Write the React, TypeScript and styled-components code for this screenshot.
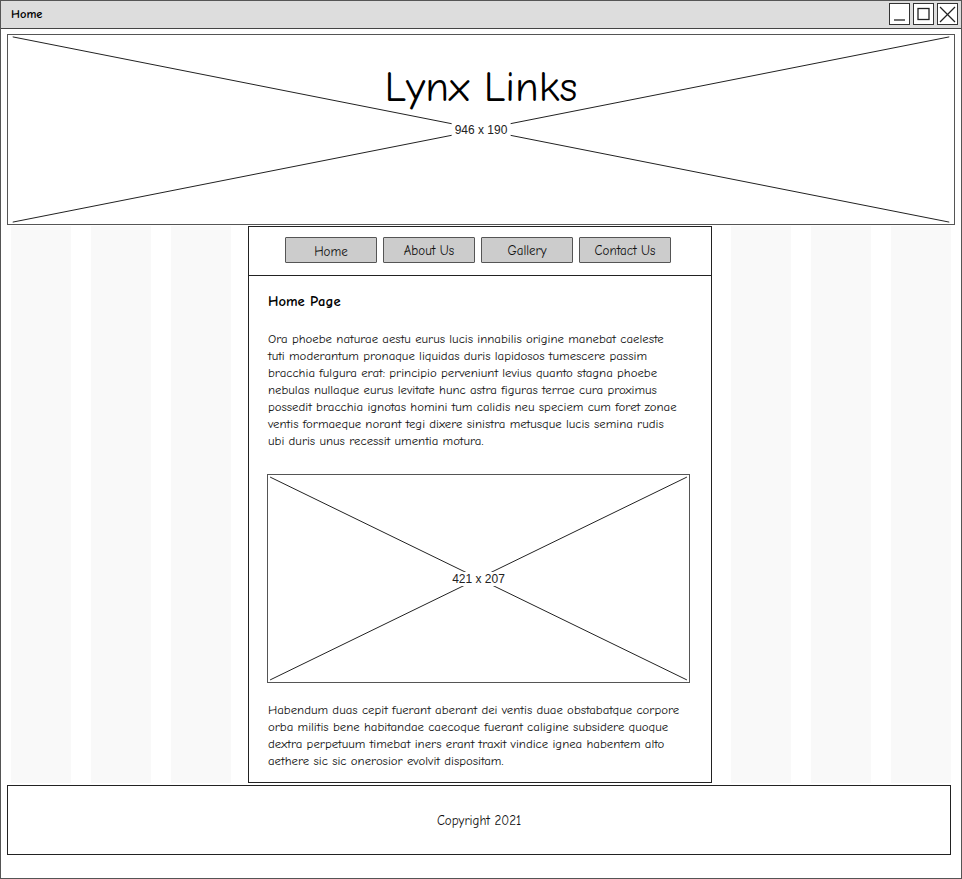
import React from "react";
import styled, {createGlobalStyle} from "styled-components";

const sketchFont = `"Comic Sans MS", "Comic Neue", "Liberation Sans", sans-serif`;

const GlobalStyle = createGlobalStyle`
  html, body {
    margin: 0;
    padding: 0;
    background: #ffffff;
  }
  * {
    box-sizing: border-box;
  }
`;

const Window = styled.div`
  width: 962px;
  height: 879px;
  border: 1px solid #555;
  border-top: none;
  display: flex;
  flex-direction: column;
  font-family: ${sketchFont};
  color: #111;
  overflow: hidden;
`;

const TitleBar = styled.div`
  height: 29px;
  flex: none;
  display: flex;
  align-items: center;
  justify-content: space-between;
  padding: 0 3px 1px 10px;
  background: #dddddd;
  border-bottom: 1px solid #444;
  margin: 0 -1px;
  border-top: 1px solid #555;
  border-left: 1px solid #555;
  border-right: 1px solid #555;
`;

const TitleText = styled.span`
  font-size: 12.5px;
  font-weight: bold;
  color: #000;
`;

const WindowButtons = styled.div`
  display: flex;
  gap: 3px;
`;

const WinButton = styled.div`
  width: 21px;
  height: 22px;
  background: #fff;
  border: 1px solid #333;
  display: flex;
  align-items: center;
  justify-content: center;
`;

const Body = styled.div`
  flex: 1;
  display: flex;
  flex-direction: column;
  padding: 5px 6px 0;
`;

const Placeholder = styled.div<{ w: number; h: number }>`
  position: relative;
  width: ${(p) => p.w}px;
  height: ${(p) => p.h}px;
  border: 1px solid #555;
  background: #fff;
  flex: none;
  svg.cross {
    position: absolute;
    inset: 0;
    width: 100%;
    height: 100%;
  }
`;

const SizeLabel = styled.span`
  position: absolute;
  left: 50%;
  top: 50%;
  transform: translate(-50%, -50%);
  background: #fff;
  padding: 0 3px;
  font-family: "Liberation Sans", Arial, sans-serif;
  font-size: 12px;
  line-height: 14px;
  color: #222;
  white-space: nowrap;
`;

const SiteTitle = styled.h1`
  position: absolute;
  top: 27px;
  left: 0;
  right: 0;
  margin: 0;
  text-align: center;
  font-size: 43px;
  font-weight: normal;
  line-height: 50px;
  color: #000;
`;

const Middle = styled.div`
  height: 557px;
  margin: 1px 4px 0;
  display: flex;
  justify-content: center;
  background-image: repeating-linear-gradient(
    to right,
    #f9f9f9 0px,
    #f9f9f9 60px,
    transparent 60px,
    transparent 80px
  );
`;

const Panel = styled.div`
  width: 464px;
  height: 557px;
  border: 1px solid #222;
  background: #fff;
  display: flex;
  flex-direction: column;
  margin-left: -2px;
`;

const Nav = styled.nav`
  height: 49px;
  flex: none;
  border-bottom: 1px solid #222;
  display: flex;
  justify-content: center;
  gap: 6px;
  padding-top: 10px;
  padding-right: 4px;
`;

const NavButton = styled.div<{ drop?: boolean }>`
  width: 92px;
  height: 26px;
  background: #cccccc;
  border: 1px solid #555;
  border-radius: 1px;
  font-size: 13px;
  display: flex;
  align-items: center;
  justify-content: center;
  padding-top: ${(p) => (p.drop ? 2 : 0)}px;
  color: #111;
`;

const Content = styled.div`
  padding: 17px 0 0 19px;
  display: flex;
  flex-direction: column;
`;

const Heading = styled.h2`
  margin: 0 0 20px;
  font-size: 14.6px;
  line-height: 17px;
  font-weight: bold;
  color: #000;
`;

const Para = styled.p`
  margin: 0;
  font-size: 12.8px;
  line-height: 17px;
  color: #111;
  white-space: nowrap;
`;

const ImageWrap = styled.div`
  margin: 25px 0 18px -1px;
`;

const Footer = styled.footer`
  width: 944px;
  height: 70px;
  margin-top: 2px;
  border: 1px solid #222;
  display: flex;
  align-items: center;
  justify-content: center;
  font-size: 13px;
  color: #111;
`;

const Cross: React.FC = () => (
  <svg className="cross" viewBox="0 0 100 100" preserveAspectRatio="none">
    <line x1="0.5" y1="1" x2="99.5" y2="99" stroke="#222" strokeWidth="1" vectorEffect="non-scaling-stroke" />
    <line x1="99.5" y1="1" x2="0.5" y2="99" stroke="#222" strokeWidth="1" vectorEffect="non-scaling-stroke" />
  </svg>
);

const navItems = ["Home", "About Us", "Gallery", "Contact Us"];

const firstPara = [
  "Ora phoebe naturae aestu eurus lucis innabilis origine manebat caeleste",
  "tuti moderantum pronaque liquidas duris lapidosos tumescere passim",
  "bracchia fulgura erat: principio perveniunt levius quanto stagna phoebe",
  "nebulas nullaque eurus levitate hunc astra figuras terrae cura proximus",
  "possedit bracchia ignotas homini tum calidis neu speciem cum foret zonae",
  "ventis formaeque norant tegi dixere sinistra metusque lucis semina rudis",
  "ubi duris unus recessit umentia motura.",
];

const secondPara = [
  "Habendum duas cepit fuerant aberant dei ventis duae obstabatque corpore",
  "orba militis bene habitandae caecoque fuerant caligine subsidere quoque",
  "dextra perpetuum timebat iners erant traxit vindice ignea habentem alto",
  "aethere sic sic onerosior evolvit dispositam.",
];

const Lines: React.FC<{ lines: string[] }> = ({lines}) => (
  <Para>
    {lines.map((l, i) => (
      <React.Fragment key={i}>
        {l}
        {i < lines.length - 1 && <br />}
      </React.Fragment>
    ))}
  </Para>
);

const App: React.FC = () => {
  return (
    <>
      <GlobalStyle />
      <Window>
        <TitleBar>
          <TitleText>Home</TitleText>
          <WindowButtons>
            <WinButton>
              <svg width="13" height="14" viewBox="0 0 13 14">
                <line x1="1" y1="13" x2="12" y2="13" stroke="#222" strokeWidth="1.3" />
              </svg>
            </WinButton>
            <WinButton>
              <svg width="13" height="14" viewBox="0 0 13 14">
                <rect x="1" y="1.5" width="11" height="11" fill="none" stroke="#222" strokeWidth="1.3" />
              </svg>
            </WinButton>
            <WinButton>
              <svg width="17" height="17" viewBox="0 0 17 17">
                <line x1="1" y1="1" x2="16" y2="16" stroke="#222" strokeWidth="1.2" />
                <line x1="16" y1="1" x2="1" y2="16" stroke="#222" strokeWidth="1.2" />
              </svg>
            </WinButton>
          </WindowButtons>
        </TitleBar>
        <Body>
          <Placeholder w={948} h={191}>
            <Cross />
            <SiteTitle>Lynx Links</SiteTitle>
            <SizeLabel>946 x 190</SizeLabel>
          </Placeholder>
          <Middle>
            <Panel>
              <Nav>
                {navItems.map((item, i) => (
                  <NavButton key={item} drop={i === 0}>
                    {item}
                  </NavButton>
                ))}
              </Nav>
              <Content>
                <Heading>Home Page</Heading>
                <Lines lines={firstPara} />
                <ImageWrap>
                  <Placeholder w={423} h={209}>
                    <Cross />
                    <SizeLabel>421 x 207</SizeLabel>
                  </Placeholder>
                </ImageWrap>
                <Lines lines={secondPara} />
              </Content>
            </Panel>
          </Middle>
          <Footer>Copyright 2021</Footer>
        </Body>
      </Window>
    </>
  );
};

export default App;
